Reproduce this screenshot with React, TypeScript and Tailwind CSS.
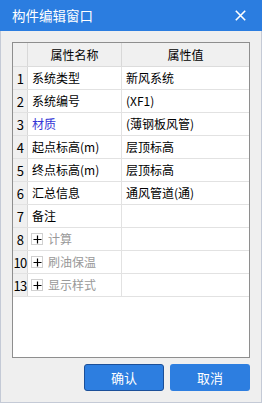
import React from "react";

type Row = { n: string; name: string; value: string; kind?: "blue" | "group" };

const rows: Row[] = [
  { n: "1", name: "系统类型", value: "新风系统" },
  { n: "2", name: "系统编号", value: "(XF1)" },
  { n: "3", name: "材质", value: "(薄钢板风管)", kind: "blue" },
  { n: "4", name: "起点标高(m)", value: "层顶标高" },
  { n: "5", name: "终点标高(m)", value: "层顶标高" },
  { n: "6", name: "汇总信息", value: "通风管道(通)" },
  { n: "7", name: "备注", value: "" },
  { n: "8", name: "计算", value: "", kind: "group" },
  { n: "10", name: "刷油保温", value: "", kind: "group" },
  { n: "13", name: "显示样式", value: "", kind: "group" },
];

function PlusBox() {
  return (
    <span className="w-[12px] h-[12px] border border-[#d0d0d0] bg-white flex items-center justify-center mr-[5px] shrink-0">
      <svg width="9" height="9" viewBox="0 0 9 9">
        <path d="M4.5 0.5v8M0.5 4.5h8" stroke="#000" strokeWidth="1.2" />
      </svg>
    </span>
  );
}

export default function App() {
  const font = { fontFamily: '"Noto Sans CJK SC", "Noto Sans", sans-serif' };
  return (
    <div className="w-[262px] h-[403px] flex flex-col bg-[#efefef]" style={font}>
      <div className="h-[31px] bg-[#2b7de0] flex items-center pl-[12px] pr-[16px] shrink-0">
        <span className="text-white text-[13.5px] leading-none flex-1">构件编辑窗口</span>
        <svg width="11" height="11" viewBox="0 0 11 11">
          <path d="M0.8 0.8L10.2 10.2M10.2 0.8L0.8 10.2" stroke="#fff" strokeWidth="1.6" />
        </svg>
      </div>
      <div className="flex-1 flex flex-col border-x border-b border-[#c4cad6] pt-[11px] px-[11px] pb-[11px]">
        <div className="h-[316px] border border-[#8e8e8e] bg-white flex flex-col text-[12px] leading-none text-[#000]">
          <div className="flex h-[24px] border-b border-[#dcdcdc] bg-[#f0f0f0] shrink-0">
            <div className="w-[15px] border-r border-[#d8d8d8] shrink-0" />
            <div className="w-[94px] border-r border-[#d8d8d8] flex items-center justify-center shrink-0">属性名称</div>
            <div className="flex-1 flex items-center justify-center">属性值</div>
          </div>
          {rows.map((r) => (
            <div key={r.n} className="flex h-[23px] border-b border-[#e2e2e2] shrink-0">
              <div className="w-[15px] bg-[#f0f0f0] border-r border-[#d8d8d8] flex items-center justify-center shrink-0 text-[13px] text-[#000] tracking-[-0.6px]">
                {r.n}
              </div>
              <div
                className={
                  "w-[94px] border-r border-[#e2e2e2] flex items-center shrink-0 " +
                  (r.kind === "group" ? "pl-[3px] text-[#999999]" : "pl-[4px]") +
                  (r.kind === "blue" ? " text-[#3535d6]" : "")
                }
              >
                {r.kind === "group" && <PlusBox />}
                {r.name}
              </div>
              <div className="flex-1 flex items-center pl-[4px]">{r.value}</div>
            </div>
          ))}
          <div className="flex-1" />
        </div>
        <div className="flex justify-end gap-[6px] mt-[6px]">
          <button className="w-[80px] h-[27px] rounded-[3px] bg-[#2d7ee0] border border-[#1b4f98] text-white text-[13px] leading-none flex items-center justify-center">
            确认
          </button>
          <button className="w-[80px] h-[27px] rounded-[3px] bg-[#2d7ee0] text-white text-[13px] leading-none flex items-center justify-center">
            取消
          </button>
        </div>
      </div>
    </div>
  );
}
